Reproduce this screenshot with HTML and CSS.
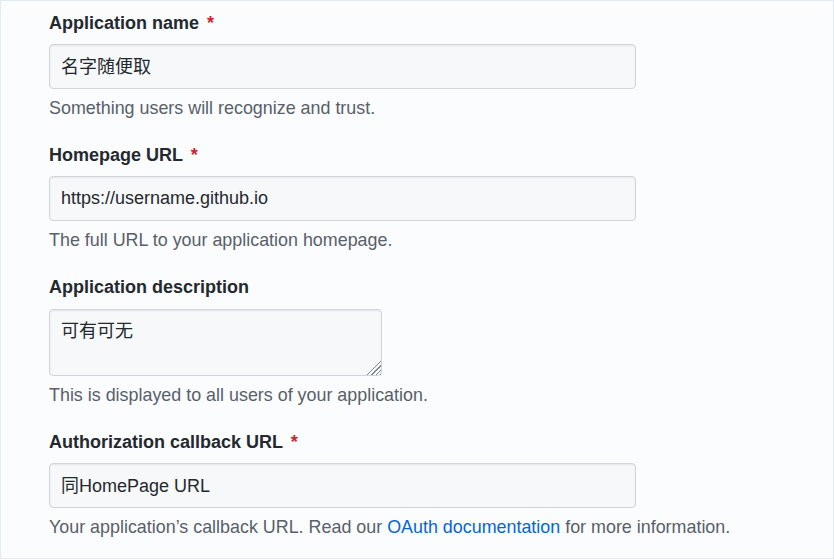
FILE: index.html
```html
<!DOCTYPE html>
<html lang="zh-CN">
<head>
<meta charset="utf-8">
<title>Register a new OAuth application</title>
<link rel="stylesheet" href="styles.css">
</head>
<body>
<div class="frame">
  <form class="app-form">
    <dl class="form-group">
      <dt><label class="label" for="app-name">Application name <span class="req">*</span></label></dt>
      <dd>
        <input class="form-control form-control-cjk" id="app-name" type="text" value="名字随便取">
        <p class="note">Something users will recognize and trust.</p>
      </dd>
    </dl>
    <dl class="form-group">
      <dt><label class="label" for="app-url">Homepage URL <span class="req">*</span></label></dt>
      <dd>
        <input class="form-control" id="app-url" type="text" value="https://username.github.io">
        <p class="note">The full URL to your application homepage.</p>
      </dd>
    </dl>
    <dl class="form-group">
      <dt><label class="label" for="app-desc">Application description</label></dt>
      <dd>
        <textarea class="form-control textarea" id="app-desc">可有可无</textarea>
        <p class="note">This is displayed to all users of your application.</p>
      </dd>
    </dl>
    <dl class="form-group">
      <dt><label class="label" for="app-cb">Authorization callback URL <span class="req">*</span></label></dt>
      <dd>
        <input class="form-control form-control-cjk" id="app-cb" type="text" value="同HomePage URL">
        <p class="note">Your application’s callback URL. Read our <a class="link" href="#">OAuth documentation</a> for more information.</p>
      </dd>
    </dl>
  </form>
</div>
</body>
</html>
```

FILE: styles.css
```css
html, body {
  margin: 0;
  padding: 0;
  background: #ffffff;
}

body {
  font-family: "Liberation Sans", "Noto Sans CJK SC", sans-serif;
  color: #24292e;
}

.frame {
  box-sizing: border-box;
  width: 834px;
  height: 559px;
  border: 1px solid #e3eaf1;
  background: #fbfcfd;
  padding: 10px 0 0 48px;
}

.app-form {
  display: flex;
  flex-direction: column;
  gap: 23px;
}

.form-group {
  margin: 0;
  display: flex;
  flex-direction: column;
}

.form-group dt,
.form-group dd {
  margin: 0;
}

.label {
  display: block;
  font-size: 18px;
  line-height: 24px;
  font-weight: 700;
  color: #24292e;
  margin-bottom: 9px;
}

.req {
  color: #cb2431;
  margin-left: 3px;
}

.form-control {
  box-sizing: border-box;
  display: block;
  width: 587px;
  height: 45px;
  margin: 0;
  padding: 0 11px;
  font-family: "Liberation Sans", "Noto Sans CJK SC", sans-serif;
  font-size: 18px;
  line-height: 20px;
  color: #24292e;
  background: #f6f8fa;
  border: 1px solid #d1d5da;
  border-radius: 4px;
  box-shadow: inset 0 1px 2px rgba(27, 31, 35, 0.075);
  outline: none;
}

/* CJK fallback glyphs enlarge the line box; pull the text back up */
.form-control-cjk {
  padding-bottom: 4px;
}

.textarea {
  width: 333px;
  height: 67px;
  padding: 11px 11px 12px;
  margin-top: 1px;
  resize: both;
  overflow: auto;
}

.textarea::-webkit-resizer {
  background:
    linear-gradient(135deg, #f6f8fa 0 52%, transparent 52%),
    repeating-linear-gradient(135deg, transparent 0 2px, #80868d 2px 3px);
}

.note {
  margin: 7px 0 0;
  font-size: 17.9px;
  line-height: 24px;
  color: #586069;
}

.link {
  color: #0366d6;
  text-decoration: none;
}
```
